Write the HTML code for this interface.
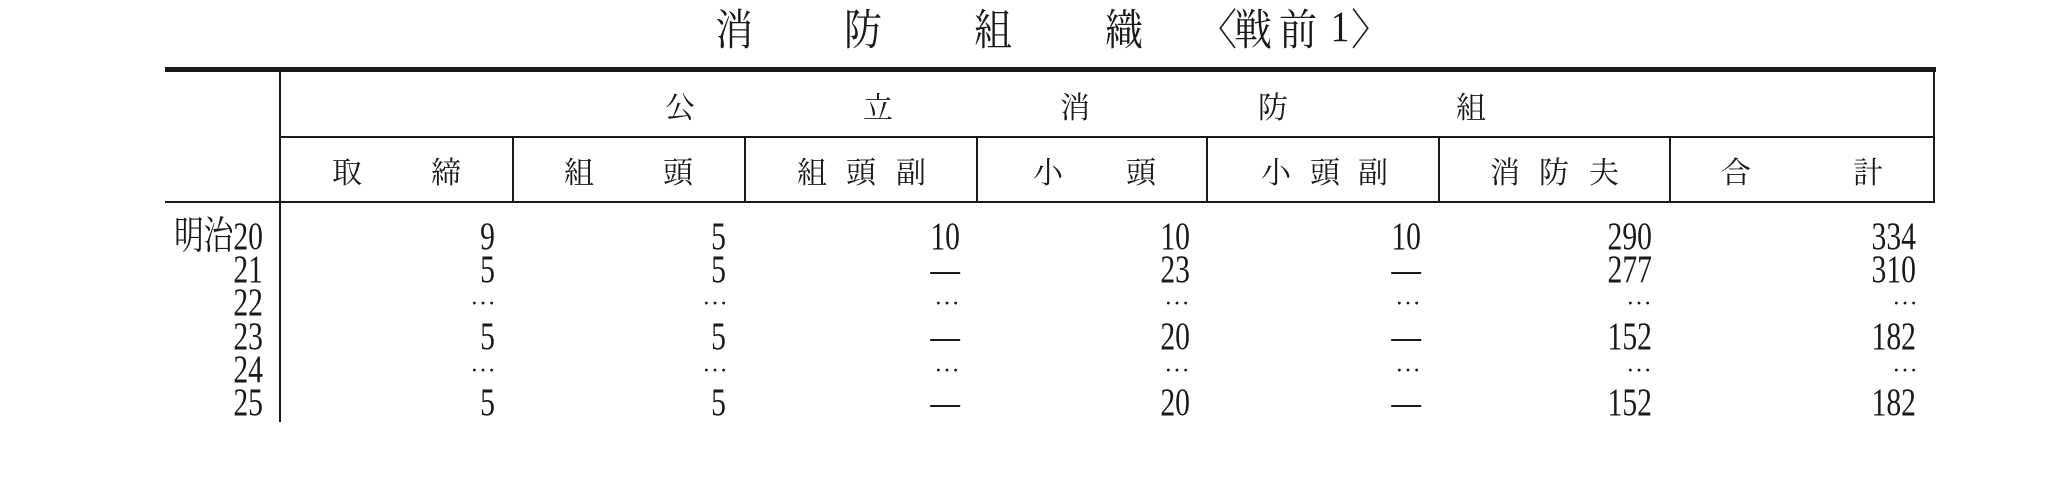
<!DOCTYPE html>
<html><head><meta charset="utf-8"><style>
body{margin:0;width:2070px;height:493px;background:#fff;position:relative;overflow:hidden;font-family:"Liberation Serif","Noto Serif CJK JP",serif;color:#1a1a1a}
.l{position:absolute;background:#1a1a1a}
.c{position:absolute;white-space:nowrap;transform:translateX(-50%);font-family:"Noto Serif CJK JP","Noto Serif CJK SC",serif}
.t{position:absolute;white-space:nowrap;font-size:43px;line-height:43px;top:6px;transform:translateX(-50%) scaleX(.88);font-family:"Noto Serif CJK JP","Noto Serif CJK SC",serif}
.h1{font-size:30px;line-height:30px;top:90px}
.h2{font-size:30px;line-height:30px;top:155px}
.n{position:absolute;white-space:nowrap;font-size:39px;line-height:36px;text-align:right;width:200px;transform:scaleX(.76);transform-origin:right center}
.d{position:absolute;white-space:nowrap;font-size:26px;line-height:36px;text-align:right;width:200px;font-family:"Noto Serif CJK JP",serif;letter-spacing:-2px}
</style></head><body>
<div class="t" style="left:734px">消</div>
<div class="t" style="left:863px">防</div>
<div class="t" style="left:993px">組</div>
<div class="t" style="left:1124px">織</div>
<div class="t" style="left:1218px">〈</div>
<div class="t" style="left:1253px">戦</div>
<div class="t" style="left:1298px">前</div>
<div class="t" style="left:1340px;font-family:'Liberation Serif',serif">1</div>
<div class="t" style="left:1370px">〉</div>

<div class="l" style="left:165px;top:67px;width:1771px;height:5px"></div>
<div class="l" style="left:279px;top:70px;width:2px;height:352px"></div>
<div class="l" style="left:1933px;top:70px;width:2px;height:133px"></div>
<div class="l" style="left:280px;top:136px;width:1654px;height:2px"></div>
<div class="l" style="left:165px;top:201px;width:1770px;height:2px"></div>
<div class="l" style="left:512px;top:137px;width:2px;height:65px"></div>
<div class="l" style="left:744px;top:137px;width:2px;height:65px"></div>
<div class="l" style="left:976px;top:137px;width:2px;height:65px"></div>
<div class="l" style="left:1206px;top:137px;width:2px;height:65px"></div>
<div class="l" style="left:1438px;top:137px;width:2px;height:65px"></div>
<div class="l" style="left:1669px;top:137px;width:2px;height:65px"></div>

<div class="c h1" style="left:680px">公</div>
<div class="c h1" style="left:878px">立</div>
<div class="c h1" style="left:1075px">消</div>
<div class="c h1" style="left:1273px">防</div>
<div class="c h1" style="left:1471px">組</div>

<div class="c h2" style="left:347px">取</div>
<div class="c h2" style="left:446px">締</div>
<div class="c h2" style="left:579px">組</div>
<div class="c h2" style="left:678px">頭</div>
<div class="c h2" style="left:812px">組</div>
<div class="c h2" style="left:861px">頭</div>
<div class="c h2" style="left:911px">副</div>
<div class="c h2" style="left:1048px">小</div>
<div class="c h2" style="left:1141px">頭</div>
<div class="c h2" style="left:1276px">小</div>
<div class="c h2" style="left:1325px">頭</div>
<div class="c h2" style="left:1373px">副</div>
<div class="c h2" style="left:1505px">消</div>
<div class="c h2" style="left:1554px">防</div>
<div class="c h2" style="left:1604px">夫</div>
<div class="c h2" style="left:1736px">合</div>
<div class="c h2" style="left:1868px">計</div>

<div class="n" style="left:63px;top:219px">明治20</div>
<div class="n" style="left:63px;top:252px">21</div>
<div class="n" style="left:63px;top:285px">22</div>
<div class="n" style="left:63px;top:319px">23</div>
<div class="n" style="left:63px;top:352px">24</div>
<div class="n" style="left:63px;top:385px">25</div>

<div class="n" style="left:295px;top:219px">9</div>
<div class="n" style="left:295px;top:252px">5</div>
<div class="d" style="left:294px;top:285px">⋯</div>
<div class="n" style="left:295px;top:319px">5</div>
<div class="d" style="left:294px;top:352px">⋯</div>
<div class="n" style="left:295px;top:385px">5</div>

<div class="n" style="left:526px;top:219px">5</div>
<div class="n" style="left:526px;top:252px">5</div>
<div class="d" style="left:526px;top:285px">⋯</div>
<div class="n" style="left:526px;top:319px">5</div>
<div class="d" style="left:526px;top:352px">⋯</div>
<div class="n" style="left:526px;top:385px">5</div>

<div class="n" style="left:760px;top:219px">10</div>
<div class="n" style="left:760px;top:252px">—</div>
<div class="d" style="left:758px;top:285px">⋯</div>
<div class="n" style="left:760px;top:319px">—</div>
<div class="d" style="left:758px;top:352px">⋯</div>
<div class="n" style="left:760px;top:385px">—</div>

<div class="n" style="left:990px;top:219px">10</div>
<div class="n" style="left:990px;top:252px">23</div>
<div class="d" style="left:988px;top:285px">⋯</div>
<div class="n" style="left:990px;top:319px">20</div>
<div class="d" style="left:988px;top:352px">⋯</div>
<div class="n" style="left:990px;top:385px">20</div>

<div class="n" style="left:1221px;top:219px">10</div>
<div class="n" style="left:1221px;top:252px">—</div>
<div class="d" style="left:1219px;top:285px">⋯</div>
<div class="n" style="left:1221px;top:319px">—</div>
<div class="d" style="left:1219px;top:352px">⋯</div>
<div class="n" style="left:1221px;top:385px">—</div>

<div class="n" style="left:1452px;top:219px">290</div>
<div class="n" style="left:1452px;top:252px">277</div>
<div class="d" style="left:1450px;top:285px">⋯</div>
<div class="n" style="left:1452px;top:319px">152</div>
<div class="d" style="left:1450px;top:352px">⋯</div>
<div class="n" style="left:1452px;top:385px">152</div>

<div class="n" style="left:1716px;top:219px">334</div>
<div class="n" style="left:1716px;top:252px">310</div>
<div class="d" style="left:1716px;top:285px">⋯</div>
<div class="n" style="left:1716px;top:319px">182</div>
<div class="d" style="left:1716px;top:352px">⋯</div>
<div class="n" style="left:1716px;top:385px">182</div>
</body></html>
